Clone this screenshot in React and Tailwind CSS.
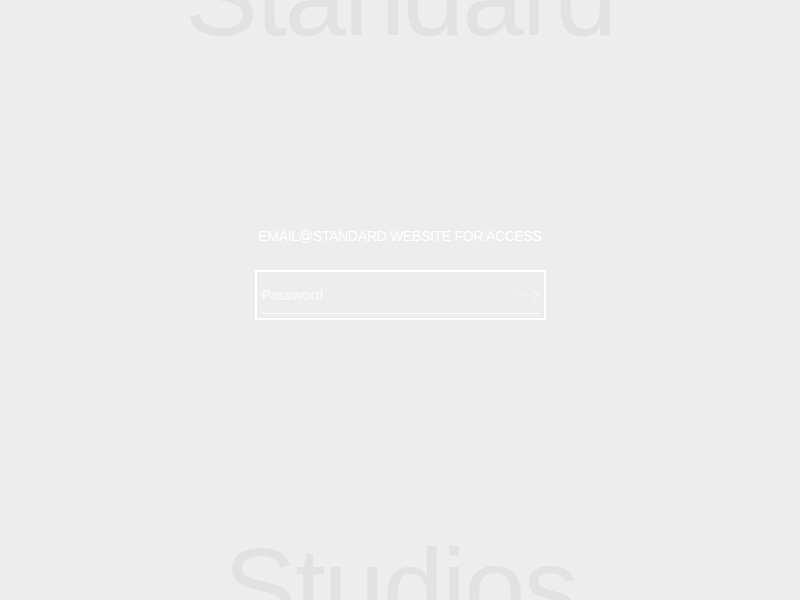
import React, { useState } from 'react';

const App = () => {
  const [password, setPassword] = useState('');

  return (
    <div className="h-screen w-full overflow-hidden bg-[#ededed] flex flex-col items-center font-['Liberation_Sans',Arial,sans-serif]">
      {/* big background wordmark, top */}
      <h1 className="-mt-[58px] text-[110px] leading-none tracking-[-2px] text-[#e2e2e2] select-none">
        Standard
      </h1>

      <div className="mt-[174px] flex flex-col items-center">
        <p className="text-[14px] leading-5 tracking-[-0.3px] text-white">EMAIL@STANDARD.WEBSITE FOR ACCESS</p>

        <form
          className="mt-6 w-[291px] h-[50px] border-2 border-white px-1 pt-[5px]"
          onSubmit={(e) => e.preventDefault()}
        >
          <div className="flex items-center h-[37px] border-b border-white/80">
            <input
              type="password"
              value={password}
              onChange={(e) => setPassword(e.target.value)}
              placeholder="Password"
              className="flex-1 min-w-0 bg-transparent pl-[1px] text-[14px] font-bold tracking-[-0.6px] text-white placeholder:text-[#f8f8f8] outline-none"
            />
            <button type="submit" className="w-6 h-6 flex items-center justify-center text-[#f4f4f4]">
              <svg width="22" height="14" viewBox="0 0 22 14" fill="none" stroke="currentColor" strokeWidth="1.2">
                <path d="M0 7h21M14 0.5l7 6.5-7 6.5" />
              </svg>
            </button>
          </div>
        </form>
      </div>

      <div className="flex-1" />

      {/* big background wordmark, bottom */}
      <h1 className="-mb-[42px] text-[110px] leading-none tracking-[-2px] text-[#e2e2e2] select-none">
        Studios
      </h1>
    </div>
  );
};

export default App;
